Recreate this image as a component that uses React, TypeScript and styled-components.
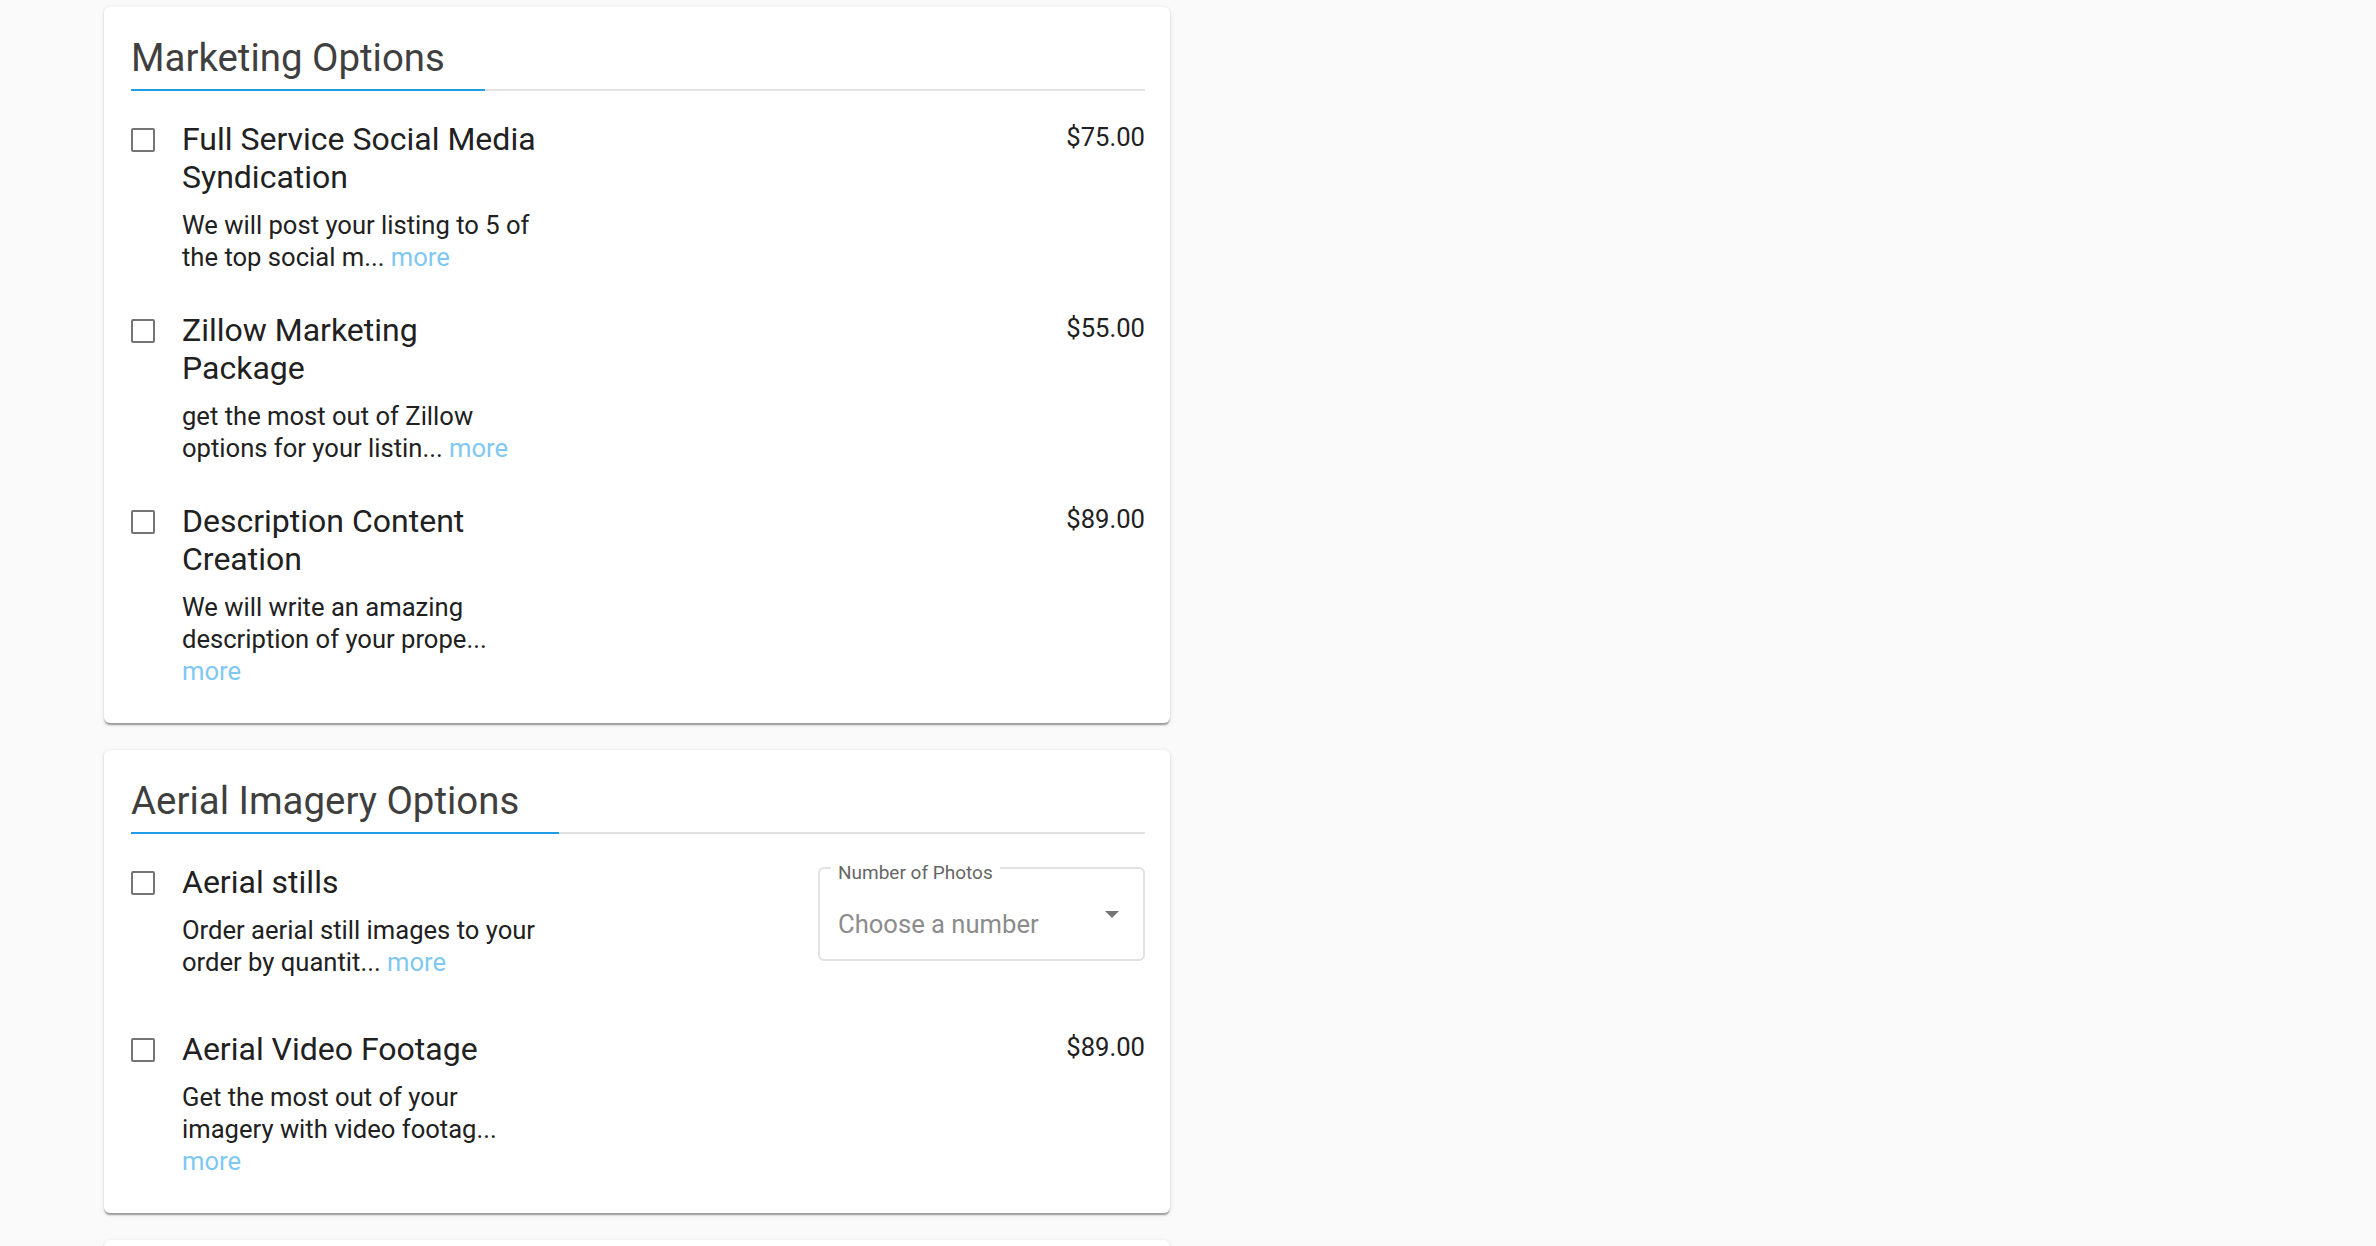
import React from "react";
import styled, { createGlobalStyle } from "styled-components";

const GlobalStyle = createGlobalStyle`
  html, body {
    margin: 0;
    padding: 0;
    background: #fafafa;
    overflow: hidden;
  }
  body {
    font-family: Roboto, "Liberation Sans", Arial, sans-serif;
    color: #212121;
  }
  * {
    box-sizing: border-box;
  }
`;

const Page = styled.div`
  display: flex;
  flex-direction: column;
  gap: 27px;
  width: 1170px;
  padding: 7px 0 0 104px;
`;

const Card = styled.section<{ $minHeight?: number }>`
  background: #ffffff;
  border-radius: 6px;
  padding: 27px 25px 36px 27px;
  min-height: ${(p) => (p.$minHeight ? `${p.$minHeight}px` : "auto")};
  box-shadow: 0 3px 1.5px -1.5px rgba(0, 0, 0, 0.2),
    0 1.5px 1.5px 0 rgba(0, 0, 0, 0.14), 0 1.5px 4.5px 0 rgba(0, 0, 0, 0.12);
`;

const SectionHeader = styled.div`
  display: flex;
  border-bottom: 2px solid #e2e2e2;
  margin-bottom: 30px;
`;

const SectionTitle = styled.h2`
  margin: 0 0 -2px 0;
  padding: 0 40px 7px 0;
  font-size: 38.4px;
  line-height: 48px;
  font-weight: 400;
  color: #3f3f3f;
  border-bottom: 2px solid #1e9de6;
`;

const ItemList = styled.div`
  display: flex;
  flex-direction: column;
  gap: 39px;
`;

const Item = styled.div`
  display: flex;
  align-items: flex-start;
`;

const Checkbox = styled.input.attrs({ type: "checkbox" })`
  appearance: none;
  flex: 0 0 auto;
  width: 24px;
  height: 24px;
  margin: 7px 27px 0 0;
  border: 2px solid #757575;
  border-radius: 2px;
  background: #fff;
  cursor: pointer;
`;

const ItemText = styled.div`
  width: 360px;
  display: flex;
  flex-direction: column;
  gap: 13px;
`;

const ItemTitle = styled.div`
  margin-top: -1px;
  font-size: 32px;
  line-height: 38px;
  color: #212121;
`;

const ItemDesc = styled.div`
  font-size: 25.6px;
  line-height: 32px;
  color: #212121;
`;

const MoreLink = styled.a`
  color: #7fc8f2;
  text-decoration: none;
  cursor: pointer;
`;

const Price = styled.div`
  margin-left: auto;
  font-size: 25.6px;
  line-height: 32px;
  color: #212121;
`;

const SelectWrap = styled.div`
  margin-left: auto;
  padding: 3px 0 31px 0;
`;

const SelectBox = styled.div`
  position: relative;
  width: 327px;
  height: 94px;
  display: flex;
  align-items: center;
  padding: 0 24px 0 18px;
  border: 2px solid #e2e2e2;
  border-radius: 6px;
  cursor: pointer;
`;

const SelectLabel = styled.span`
  position: absolute;
  top: -8px;
  left: 11px;
  padding: 0 7px;
  background: #fff;
  font-size: 19px;
  line-height: 24px;
  color: #666666;
`;

const SelectValue = styled.span`
  margin-top: 20px;
  font-size: 25.6px;
  line-height: 32px;
  color: #8c8c8c;
`;

const Arrow = styled.svg`
  margin-left: auto;
  flex: 0 0 auto;
`;

type Option = {
  title: string;
  desc: string;
  price?: string;
  select?: { label: string; placeholder: string };
};

const sections: { title: string; items: Option[] }[] = [
  {
    title: "Marketing Options",
    items: [
      {
        title: "Full Service Social Media Syndication",
        desc: "We will post your listing to 5 of the top social m...",
        price: "$75.00",
      },
      {
        title: "Zillow Marketing Package",
        desc: "get the most out of Zillow options for your listin...",
        price: "$55.00",
      },
      {
        title: "Description Content Creation",
        desc: "We will write an amazing description of your prope...",
        price: "$89.00",
      },
    ],
  },
  {
    title: "Aerial Imagery Options",
    items: [
      {
        title: "Aerial stills",
        desc: "Order aerial still images to your order by quantit...",
        select: { label: "Number of Photos", placeholder: "Choose a number" },
      },
      {
        title: "Aerial Video Footage",
        desc: "Get the most out of your imagery with video footag...",
        price: "$89.00",
      },
    ],
  },
];

const OptionRow: React.FC<{ option: Option }> = ({ option }) => (
  <Item>
    <Checkbox aria-label={option.title} />
    <ItemText>
      <ItemTitle>{option.title}</ItemTitle>
      <ItemDesc>
        {option.desc} <MoreLink>more</MoreLink>
      </ItemDesc>
    </ItemText>
    {option.price && <Price>{option.price}</Price>}
    {option.select && (
      <SelectWrap>
        <SelectBox>
          <SelectLabel>{option.select.label}</SelectLabel>
          <SelectValue>{option.select.placeholder}</SelectValue>
          <Arrow width="14" height="7" viewBox="0 0 14 7">
            <path d="M0 0h14L7 7z" fill="#757575" />
          </Arrow>
        </SelectBox>
      </SelectWrap>
    )}
  </Item>
);

export default function App() {
  return (
    <>
      <GlobalStyle />
      <Page>
        {sections.map((section) => (
          <Card key={section.title}>
            <SectionHeader>
              <SectionTitle>{section.title}</SectionTitle>
            </SectionHeader>
            <ItemList>
              {section.items.map((item) => (
                <OptionRow key={item.title} option={item} />
              ))}
            </ItemList>
          </Card>
        ))}
        <Card $minHeight={200} />
      </Page>
    </>
  );
}
